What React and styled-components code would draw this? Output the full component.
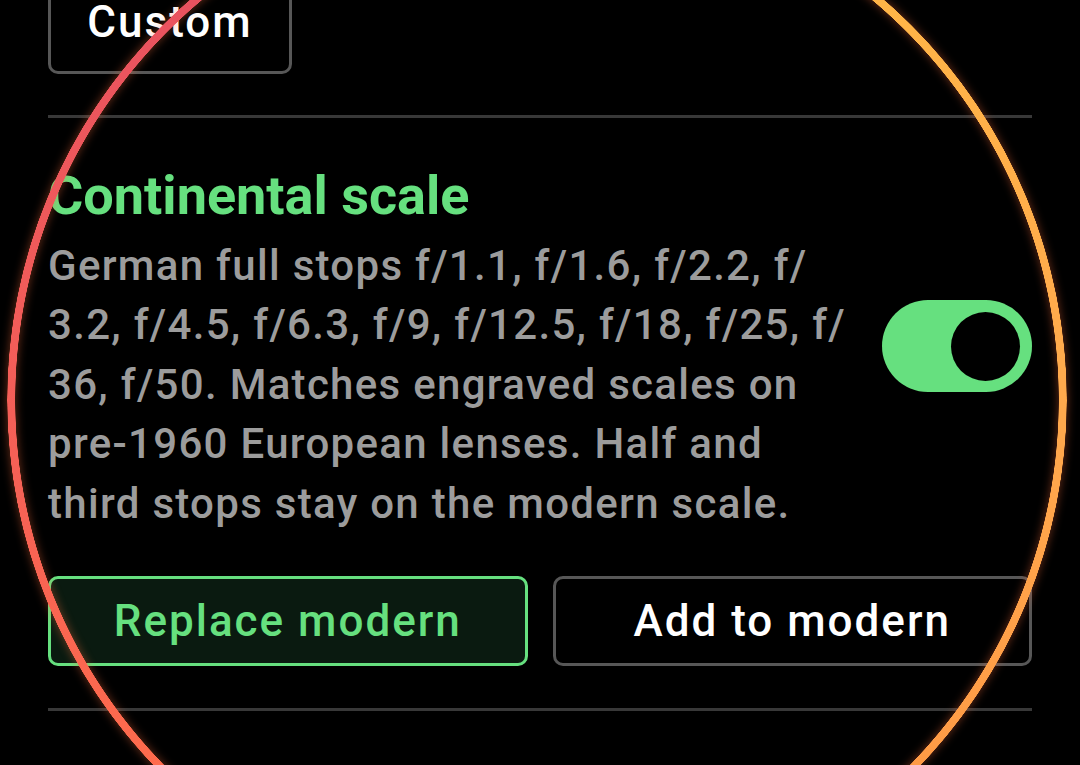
import styled, { createGlobalStyle } from 'styled-components';

const GlobalStyle = createGlobalStyle`
  html, body {
    margin: 0;
    padding: 0;
    background: #000;
    overflow: hidden;
  }
  body {
    font-family: Roboto, "Noto Sans", "Liberation Sans", sans-serif;
    color: #fff;
  }
`;

const Screen = styled.div`
  width: 1080px;
  height: 765px;
  background: #000;
  overflow: hidden;
  box-sizing: border-box;
  padding: 0 48px;
  display: flex;
  flex-direction: column;
`;

const Button = styled.button`
  box-sizing: border-box;
  height: 90px;
  border-radius: 10px;
  border: 3px solid ${(p) => (p.$active ? '#66e07f' : '#575757')};
  background: ${(p) => (p.$active ? '#0a1a10' : '#000')};
  color: ${(p) => (p.$active ? '#66e07f' : '#fff')};
  font-family: inherit;
  font-size: 44px;
  font-weight: 500;
  letter-spacing: 2px;
  padding: 0;
  cursor: pointer;
`;

const CustomButton = styled(Button)`
  width: 244px;
  height: 104px;
  margin-top: -30px;
`;

const Divider = styled.div`
  height: 3px;
  background: #383838;
  margin-top: ${(p) => p.$top}px;
`;

const Setting = styled.div`
  display: flex;
  align-items: center;
  gap: 36px;
  margin-top: 46px;
`;

const TextCol = styled.div`
  flex: 1;
  min-width: 0;
`;

const Title = styled.h2`
  margin: 0;
  font-size: 54px;
  line-height: 63.6px;
  font-weight: 700;
  color: #66e07f;
`;

const Description = styled.p`
  margin: 8px 0 0;
  font-size: 42px;
  line-height: 59.5px;
  font-weight: 500;
  letter-spacing: 1.3px;
  color: #9c9c9c;
  white-space: nowrap;
`;

const Toggle = styled.div`
  position: relative;
  flex: none;
  width: 150px;
  height: 92px;
  margin-bottom: 6px;
  border-radius: 46px;
  background: ${(p) => (p.$on ? '#66e07f' : '#444')};
`;

const Knob = styled.div`
  position: absolute;
  top: 12px;
  ${(p) => (p.$on ? 'right: 12px;' : 'left: 12px;')}
  width: 69px;
  height: 69px;
  border-radius: 50%;
  background: #000;
`;

const Actions = styled.div`
  display: grid;
  grid-template-columns: 1fr 1fr;
  gap: 25px;
  margin-top: 43px;
`;

const RingGlow = styled.div`
  position: fixed;
  left: 7px;
  top: -130px;
  width: 1060px;
  height: 1060px;
  pointer-events: none;
  filter: drop-shadow(0 0 5px rgba(255, 110, 60, 0.45));
`;

const ringMask = 'radial-gradient(circle closest-side, transparent calc(100% - 8.5px), #000 calc(100% - 8px), #000 calc(100% - 0.5px), transparent 100%)';

const Ring = styled.div`
  width: 100%;
  height: 100%;
  border-radius: 50%;
  background: conic-gradient(
    #f4835a 0deg,
    #ffb547 41deg,
    #ffa94d 90deg,
    #ff9a45 136deg,
    #ff8147 185deg,
    #ff6c4c 224deg,
    #f45f57 268deg,
    #e9525f 319deg,
    #f4835a 360deg
  );
  -webkit-mask: ${ringMask};
  mask: ${ringMask};
`;

export default function App() {
  return (
    <>
      <GlobalStyle />
      <Screen>
        <CustomButton>Custom</CustomButton>
        <Divider $top={41} />
        <Setting>
          <TextCol>
            <Title>Continental scale</Title>
            <Description>
              German full stops f/1.1, f/1.6, f/2.2, f/<br />
              3.2, f/4.5, f/6.3, f/9, f/12.5, f/18, f/25, f/<br />
              36, f/50. Matches engraved scales on<br />
              pre-1960 European lenses. Half and<br />
              third stops stay on the modern scale.
            </Description>
          </TextCol>
          <Toggle $on>
            <Knob $on />
          </Toggle>
        </Setting>
        <Actions>
          <Button $active>Replace modern</Button>
          <Button>Add to modern</Button>
        </Actions>
        <Divider $top={42} />
      </Screen>
      <RingGlow>
        <Ring />
      </RingGlow>
    </>
  );
}
